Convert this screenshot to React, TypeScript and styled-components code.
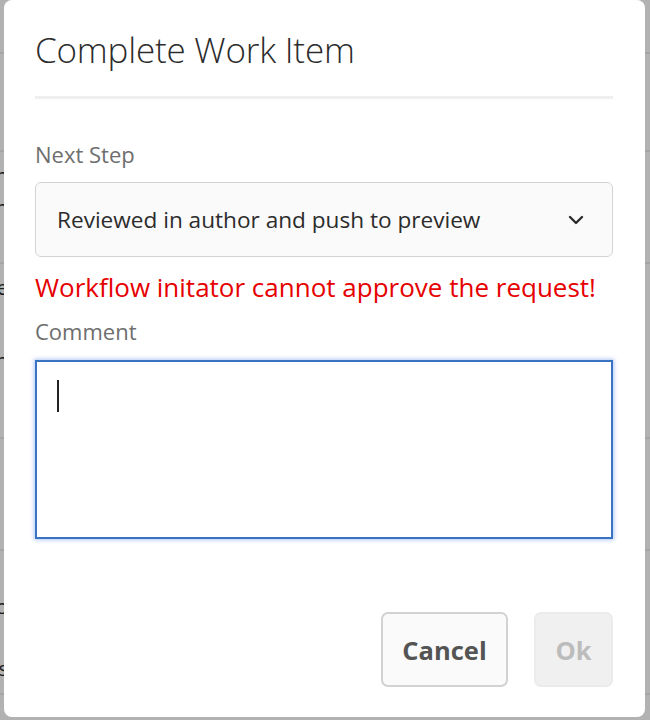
import React from 'react';
import styled, { createGlobalStyle } from 'styled-components';

const GlobalStyle = createGlobalStyle`
  html, body {
    margin: 0;
    padding: 0;
    background: #b2b2b2;
  }
  body {
    font-family: 'Open Sans', 'Noto Sans', sans-serif;
  }
`;

const Page = styled.div`
  position: relative;
  width: 650px;
  height: 720px;
  overflow: hidden;
  background: #b2b2b2;
`;

const Backdrop = styled.div`
  display: flex;
  flex-direction: column;
`;

const BgRow = styled.div<{ $h: number }>`
  height: ${(p) => p.$h}px;
  border-bottom: 2px solid #a5a5a5;
  box-sizing: border-box;
  display: flex;
  flex-direction: column;
  padding-top: ${(p) => (p.$h > 100 ? 8 : 0)}px;
`;

const BgText = styled.div<{ $gap?: number }>`
  width: 8px;
  display: flex;
  justify-content: flex-end;
  overflow: hidden;
  white-space: nowrap;
  font-size: 20px;
  line-height: 32px;
  color: #1c1c1c;
  margin-top: ${(p) => p.$gap ?? 0}px;
`;

const Dialog = styled.div`
  position: absolute;
  left: 4px;
  top: 0;
  width: 641px;
  height: 717px;
  box-sizing: border-box;
  background: #ffffff;
  border-radius: 8px;
  padding: 26px 32px 30px 31px;
  display: flex;
  flex-direction: column;
`;

const Title = styled.h1`
  margin: 0;
  font-family: 'Open Sans', sans-serif;
  font-weight: 300;
  font-size: 35px;
  line-height: 48px;
  color: #2c2c2c;
  letter-spacing: -0.2px;
`;

const Divider = styled.div`
  height: 3px;
  background: #efefef;
  margin-top: 22px;
`;

const Label = styled.label<{ $top: number }>`
  display: block;
  margin-top: ${(p) => p.$top}px;
  font-size: 22px;
  line-height: 28px;
  color: #6e6e6e;
`;

const Select = styled.div`
  margin-top: 14px;
  height: 75px;
  box-sizing: border-box;
  border: 1.5px solid #d3d3d3;
  border-radius: 6px;
  background: #fafafa;
  display: flex;
  align-items: center;
  justify-content: space-between;
  padding: 0 28px 0 21px;
  font-size: 22.6px;
  color: #2c2c2c;
`;

const Chevron = styled.svg`
  width: 16px;
  height: 10px;
`;

const ErrorText = styled.div`
  margin-top: 13px;
  font-size: 26px;
  line-height: 34px;
  color: #e60000;
`;

const TextArea = styled.div`
  margin-top: 15px;
  height: 179px;
  box-sizing: border-box;
  border: 2px solid #3a72c2;
  box-shadow: 0 0 4px 1px rgba(80, 130, 230, 0.45);
  background: #ffffff;
  padding: 18px 20px;
`;

const Caret = styled.div`
  width: 2px;
  height: 32px;
  background: #222222;
`;

const Footer = styled.div`
  margin-top: auto;
  display: flex;
  justify-content: flex-end;
  gap: 26px;
`;

const Button = styled.button<{ $disabled?: boolean }>`
  height: 75px;
  box-sizing: border-box;
  padding: 0 18px;
  border-radius: 7px;
  border: 2px solid ${(p) => (p.$disabled ? '#ebebeb' : '#d2d2d2')};
  background: ${(p) => (p.$disabled ? '#f0f0f0' : '#fafafa')};
  color: ${(p) => (p.$disabled ? '#bcbcbc' : '#545454')};
  font-family: 'Open Sans', sans-serif;
  font-weight: 700;
  font-size: 25.5px;
  min-width: ${(p) => (p.$disabled ? 79 : 127)}px;
`;

const App: React.FC = () => {
  return (
    <Page>
      <GlobalStyle />
      <Backdrop>
        <BgRow $h={54} />
        <BgRow $h={98} />
        <BgRow $h={112}>
          <BgText>Open in</BgText>
          <BgText>Edit in</BgText>
        </BgRow>
        <BgRow $h={175}>
          <BgText>Title here</BgText>
          <BgText $gap={41}>Open in</BgText>
        </BgRow>
        <BgRow $h={112} />
        <BgRow $h={144}>
          <BgText $gap={32}>Demo</BgText>
          <BgText $gap={30}>Status</BgText>
        </BgRow>
      </Backdrop>
      <Dialog>
        <Title>Complete Work Item</Title>
        <Divider />
        <Label $top={41}>Next Step</Label>
        <Select>
          <span>Reviewed in author and push to preview</span>
          <Chevron viewBox="0 0 16 10">
            <path
              d="M2 2 L8 8 L14 2"
              fill="none"
              stroke="#2c2c2c"
              strokeWidth="2.4"
              strokeLinecap="round"
              strokeLinejoin="round"
            />
          </Chevron>
        </Select>
        <ErrorText>Workflow initator cannot approve the request!</ErrorText>
        <Label $top={13}>Comment</Label>
        <TextArea>
          <Caret />
        </TextArea>
        <Footer>
          <Button>Cancel</Button>
          <Button $disabled>Ok</Button>
        </Footer>
      </Dialog>
    </Page>
  );
};

export default App;
